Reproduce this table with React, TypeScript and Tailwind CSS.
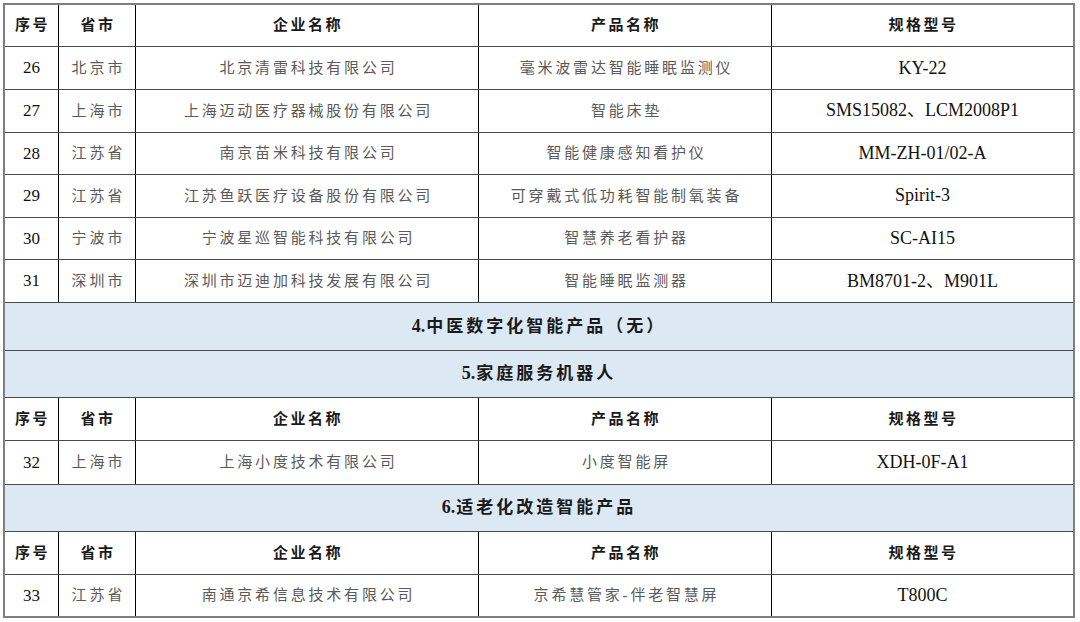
import React from 'react';

type Row = { no: string; region: string; company: string; product: string; model: string };

const font = 'font-["Liberation_Serif","Noto_Sans_CJK_SC",serif]';

const firstRows: Row[] = [
  { no: '26', region: '北京市', company: '北京清雷科技有限公司', product: '毫米波雷达智能睡眠监测仪', model: 'KY-22' },
  { no: '27', region: '上海市', company: '上海迈动医疗器械股份有限公司', product: '智能床垫', model: 'SMS15082、LCM2008P1' },
  { no: '28', region: '江苏省', company: '南京苗米科技有限公司', product: '智能健康感知看护仪', model: 'MM-ZH-01/02-A' },
  { no: '29', region: '江苏省', company: '江苏鱼跃医疗设备股份有限公司', product: '可穿戴式低功耗智能制氧装备', model: 'Spirit-3' },
  { no: '30', region: '宁波市', company: '宁波星巡智能科技有限公司', product: '智慧养老看护器', model: 'SC-AI15' },
  { no: '31', region: '深圳市', company: '深圳市迈迪加科技发展有限公司', product: '智能睡眠监测器', model: 'BM8701-2、M901L' },
];

const HeaderRow = ({ h }: { h: string }) => (
  <div className={`grid grid-cols-[54px_77px_343px_293px_301px] ${h} border-b-[1.5px] border-[#4a4a4a]`}>
    {['序号', '省市', '企业名称', '产品名称', '规格型号'].map((t, i) => (
      <div
        key={t}
        className={`flex items-center justify-center pl-[2px] text-[15px] font-bold tracking-[2.5px] text-[#1a1a1a] ${i < 4 ? 'border-r border-black' : ''}`}
      >
        {t}
      </div>
    ))}
  </div>
);

const DataRow = ({ row, h, last }: { row: Row; h: string; last?: boolean }) => (
  <div className={`grid grid-cols-[54px_77px_343px_293px_301px] ${h} ${last ? '' : 'border-b-[1.5px] border-[#4a4a4a]'}`}>
    <div className="flex items-center justify-center border-r border-black text-[17px] text-[#111]">{row.no}</div>
    <div className="flex items-center justify-center border-r border-black pl-[3px] text-[15px] tracking-[3px] text-[#5a5a5a]">{row.region}</div>
    <div className="flex items-center justify-center border-r border-black pl-[3px] text-[15px] tracking-[2.8px] text-[#5a5a5a]">{row.company}</div>
    <div className="flex items-center justify-center border-r border-black pl-[3px] text-[15px] tracking-[2.8px] text-[#5a5a5a]">{row.product}</div>
    <div className="flex items-center justify-center text-[18px] text-[#111]">{row.model}</div>
  </div>
);

const SectionRow = ({ num, title, h }: { num: string; title: string; h: string }) => (
  <div className={`flex ${h} items-center justify-center border-b-[1.5px] border-[#4a4a4a] bg-[#dde8f5] font-bold text-[#1a1a1a]`}>
    <span className="text-[18px]">{num}</span>
    <span className="pl-[1px] text-[17px] tracking-[3px]">{title}</span>
  </div>
);

export default function App() {
  return (
    <div className={`h-[622px] w-[1080px] overflow-hidden bg-white pl-[3px] pt-[3px] ${font}`}>
      <div className="w-[1072px] border-2 border-[#7f7f7f]">
        <HeaderRow h="h-[42px]" />
        {firstRows.map((r, i) => (
          <DataRow key={r.no} row={r} h={i === 0 ? 'h-[43px]' : 'h-[42.6px]'} />
        ))}
        <SectionRow num="4." title="中医数字化智能产品（无）" h="h-[48px]" />
        <SectionRow num="5." title="家庭服务机器人" h="h-[47px]" />
        <HeaderRow h="h-[43px]" />
        <DataRow row={{ no: '32', region: '上海市', company: '上海小度技术有限公司', product: '小度智能屏', model: 'XDH-0F-A1' }} h="h-[44px]" />
        <SectionRow num="6." title="适老化改造智能产品" h="h-[47px]" />
        <HeaderRow h="h-[43px]" />
        <DataRow row={{ no: '33', region: '江苏省', company: '南通京希信息技术有限公司', product: '京希慧管家-伴老智慧屏', model: 'T800C' }} h="h-[41px]" last />
      </div>
    </div>
  );
}
